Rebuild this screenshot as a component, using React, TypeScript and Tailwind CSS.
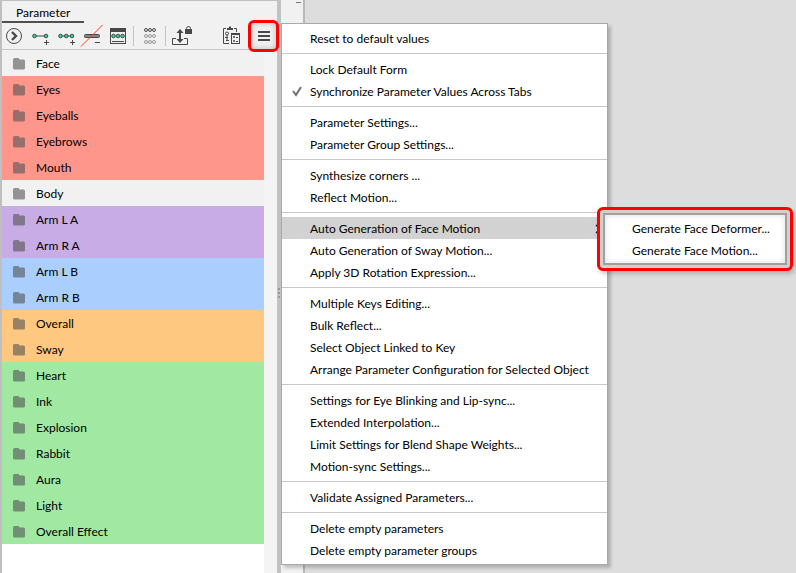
import React from "react";

const groups = [
  { name: "Face", color: "bg-[#f1f1f1]" },
  { name: "Eyes", color: "bg-[#ff968c]" },
  { name: "Eyeballs", color: "bg-[#ff968c]" },
  { name: "Eyebrows", color: "bg-[#ff968c]" },
  { name: "Mouth", color: "bg-[#ff968c]" },
  { name: "Body", color: "bg-[#f1f1f1]" },
  { name: "Arm L A", color: "bg-[#c8ace6]" },
  { name: "Arm R A", color: "bg-[#c8ace6]" },
  { name: "Arm L B", color: "bg-[#aacfff]" },
  { name: "Arm R B", color: "bg-[#aacfff]" },
  { name: "Overall", color: "bg-[#ffc880]" },
  { name: "Sway", color: "bg-[#ffc880]" },
  { name: "Heart", color: "bg-[#a1e8a3]" },
  { name: "Ink", color: "bg-[#a1e8a3]" },
  { name: "Explosion", color: "bg-[#a1e8a3]" },
  { name: "Rabbit", color: "bg-[#a1e8a3]" },
  { name: "Aura", color: "bg-[#a1e8a3]" },
  { name: "Light", color: "bg-[#a1e8a3]" },
  { name: "Overall Effect", color: "bg-[#a1e8a3]" },
];

type Item = { label: string; checked?: boolean; open?: boolean };

const sections: Item[][] = [
  [{ label: "Reset to default values" }],
  [{ label: "Lock Default Form" }, { label: "Synchronize Parameter Values Across Tabs", checked: true }],
  [{ label: "Parameter Settings..." }, { label: "Parameter Group Settings..." }],
  [{ label: "Synthesize corners ..." }, { label: "Reflect Motion..." }],
  [
    { label: "Auto Generation of Face Motion", open: true },
    { label: "Auto Generation of Sway Motion..." },
    { label: "Apply 3D Rotation Expression..." },
  ],
  [
    { label: "Multiple Keys Editing..." },
    { label: "Bulk Reflect..." },
    { label: "Select Object Linked to Key" },
    { label: "Arrange Parameter Configuration for Selected Object" },
  ],
  [
    { label: "Settings for Eye Blinking and Lip-sync..." },
    { label: "Extended Interpolation..." },
    { label: "Limit Settings for Blend Shape Weights..." },
    { label: "Motion-sync Settings..." },
  ],
  [{ label: "Validate Assigned Parameters..." }],
  [{ label: "Delete empty parameters" }, { label: "Delete empty parameter groups" }],
];

function Dots({ xs, y }: { xs: number[]; y: number }) {
  return (
    <>
      {xs.map((x) => (
        <circle key={x} cx={x} cy={y} r="1.8" fill="#1fdc9c" stroke="#484848" />
      ))}
    </>
  );
}

function ToolButton({ label, className, children }: { label: string; className: string; children: React.ReactNode }) {
  return (
    <button aria-label={label} className={`h-6 shrink-0 ${className}`}>
      <svg className="h-6 w-full" fill="none" stroke="#484848">
        {children}
      </svg>
    </button>
  );
}

function Toolbar() {
  return (
    <div className="flex h-6 items-center">
      <ToolButton label="Expand" className="ml-0.5 w-5">
        <circle cx="10" cy="12" r="7.5" />
        <path d="M8 8l4 4-4 4" strokeWidth="2.4" />
      </ToolButton>
      <ToolButton label="Add two keys" className="ml-1.5 w-5">
        <path d="M5 12h10" stroke="#999" strokeWidth="2" />
        <Dots xs={[4.5, 16]} y={12} />
        <path d="M14 18.5h5M16.5 16v5" />
      </ToolButton>
      <ToolButton label="Add three keys" className="ml-1.5 w-5">
        <path d="M5 12h10" stroke="#999" strokeWidth="2" />
        <Dots xs={[4.5, 10.25, 16]} y={12} />
        <path d="M14 18.5h5M16.5 16v5" />
      </ToolButton>
      <ToolButton label="Delete keys" className="ml-1 w-6">
        <rect x="4.5" y="10.5" width="15" height="3" rx="1" fill="#858585" />
        <path d="M15 18.5h5" />
        <path d="M1 22.5L22.5 1" stroke="#ff3a20" />
      </ToolButton>
      <ToolButton label="Key list" className="ml-1 w-5">
        <rect x="2.5" y="4.5" width="15" height="15" />
        <path d="M2 6h16" strokeWidth="4" />
        <path d="M4 17.5h12" />
        <Dots xs={[5.5, 10, 14.5]} y={12} />
      </ToolButton>
      <span className="ml-[5px] h-5 w-px shrink-0 bg-[#c4c4c4]" />
      <ToolButton label="Key form" className="ml-[7px] w-5">
        {[6, 12, 18].map((y) => (
          <g key={y} stroke={y === 6 ? "#484848" : "#999"}>
            <circle cx="5" cy={y} r="1.5" />
            <circle cx="9" cy={y} r="1.5" />
            <circle cx="13" cy={y} r="1.5" />
          </g>
        ))}
      </ToolButton>
      <span className="ml-1 h-5 w-px shrink-0 bg-[#c4c4c4]" />
      <ToolButton label="Lock range" className="ml-1.5 w-6">
        <path d="M4 14.5H0.5v6h15v-6H12" />
        <path d="M8 7v9" strokeWidth="2" />
        <path d="M8 5l3.500 4h-7zM8 19l3.500-4h-7z" fill="#484848" stroke="none" />
        <path d="M14.500 6V4.500q0-2 2-2t2 2V6" />
        <rect x="13" y="5" width="7" height="5" fill="#484848" stroke="none" />
      </ToolButton>
      <ToolButton label="Paste settings" className="ml-[26px] w-5">
        <path d="M4 4.500H1.500v15H7M12 4.500h2.500V8" />
        <path d="M5 5h6M8 2.500v2" strokeWidth="2" />
        <rect x="9.5" y="9.500" width="8" height="10" />
        <path d="M9 10h9" strokeWidth="2" />
        <path d="M11.500 12.500h1v1h-1zM11.500 16.500h1v1h-1zM14 13.500h2M14 17.500h2" />
        <circle cx="5" cy="9.500" r="1.500" />
        <path d="M5 11v5M4 16.500h3M3 13.500h3" />
      </ToolButton>
      <button
        aria-label="Menu"
        className="relative z-10 ml-1.5 flex h-8 w-[31px] shrink-0 items-center justify-center rounded-md border-3 border-[#f00] bg-[#f1f1f1] shadow-[inset_0_0_6px_#bbb]"
      >
        <svg className="size-3" stroke="#484848" strokeWidth="2">
          <path d="M0 2h12M0 6h12M0 10h12" />
        </svg>
      </button>
    </div>
  );
}

function ParameterPanel() {
  return (
    <aside className="flex w-[277px] shrink-0 flex-col border-t border-l-2 border-[#bfbfbf] bg-[#f1f1f1]">
      <h1 className="h-[22px] w-[82px] border-b-2 border-[#505050] pl-3.5 pt-0.5 leading-5">Parameter</h1>
      <div className="h-[27px] border-b border-[#c8c8c8] pt-px">
        <Toolbar />
      </div>
      <div className="flex grow">
        <ul className="grow bg-white">
          {groups.map((g) => (
            <li key={g.name} className={`flex h-[26px] items-center gap-[11px] pl-[11px] pt-0.5 ${g.color}`}>
              <svg className="h-3 w-3" fill="#505050" fillOpacity="0.58">
                <path d="M0 1.500Q0 0 1.500 0H5.500l1 1.500h4Q12 1.500 12 3V10Q12 11.500 10.500 11.500H1.500Q0 11.500 0 10z" />
              </svg>
              {g.name}
            </li>
          ))}
        </ul>
        <div className="w-[13px] bg-[#f4f4f4]" />
      </div>
    </aside>
  );
}

function Submenu() {
  return (
    <div className="absolute -top-2.5 left-[315px] z-10 w-[196px] rounded-md border-3 border-[#f00] bg-[#d0d0d0] p-[3px] shadow-[2px_3px_4px_#0003]">
      <div role="menu" className="border-2 border-[#a0a0a0] bg-white py-0.5 shadow-[inset_0_0_6px_#0002]">
        {["Generate Face Deformer...", "Generate Face Motion..."].map((label) => (
          <button
            key={label}
            role="menuitem"
            className="flex h-[22px] w-full items-center whitespace-nowrap pl-[27px] pt-0.5 text-left"
          >
            {label}
          </button>
        ))}
      </div>
    </div>
  );
}

function ContextMenu() {
  return (
    <div
      role="menu"
      className="absolute left-[281px] top-[23px] w-[327px] border border-[#a8a8a8] bg-white py-[3px] shadow-[3px_3px_3px_#0003]"
    >
      {sections.map((items, i) => (
        <div key={i} className={i ? "mt-1 border-t border-[#c8c8c8] pt-1" : ""}>
          {items.map((item) => (
            <div key={item.label} className="relative">
              <button
                role="menuitem"
                className={`flex h-[22px] w-full items-center whitespace-nowrap pr-1.5 pt-0.5 text-left ${item.open ? "bg-[#d2d2d2]" : ""}`}
              >
                <span className="w-7 shrink-0 pl-2.5">
                  {item.checked && (
                    <svg className="h-3 w-2.5" fill="none" stroke="#707070" strokeWidth="2">
                      <path d="M1 5l3 4 5-8" />
                    </svg>
                  )}
                </span>
                <span className="grow">{item.label}</span>
                {item.open && (
                  <svg className="h-2.5 w-1.5" fill="none" stroke="#222" strokeWidth="1.5">
                    <path d="M1 1l4 4-4 4" />
                  </svg>
                )}
              </button>
              {item.open && <Submenu />}
            </div>
          ))}
        </div>
      ))}
    </div>
  );
}

export default function App() {
  return (
    <main className="relative flex h-screen overflow-hidden bg-[#ddd] font-['Lato',sans-serif] text-[12px] leading-[22px] text-black">
      <ParameterPanel />
      <div className="flex w-1 shrink-0 flex-col items-center justify-center gap-0.5 bg-[#c2c2c2] pt-3">
        <span className="size-0.5 bg-[#999]" />
        <span className="size-0.5 bg-[#999]" />
        <span className="size-0.5 bg-[#999]" />
      </div>
      <div className="flex w-6 shrink-0 justify-end border-r-2 border-[#b8b8b8] bg-[#f1f1f1] pr-0.5 pt-0.5">
        <span className="h-px w-[5px] bg-[#777]" />
      </div>
      <div className="grow" />
      <ContextMenu />
    </main>
  );
}
